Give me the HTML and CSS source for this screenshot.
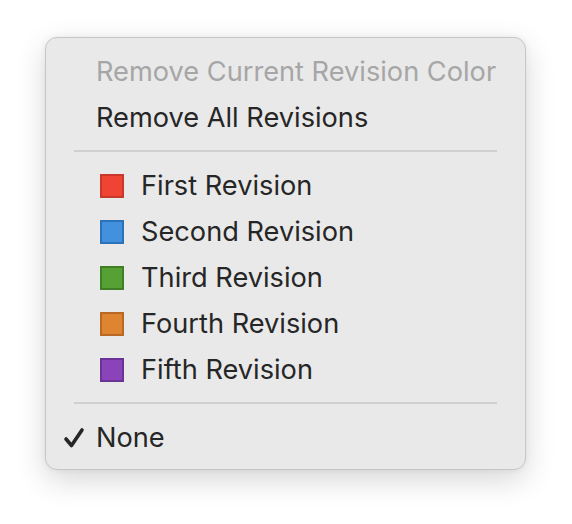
FILE: index.html
```html
<!DOCTYPE html>
<html>
<head>
<meta charset="utf-8">
<link rel="stylesheet" href="styles.css">
</head>
<body>
<div class="stage">
  <div class="menu">
    <div class="item disabled"><span class="label">Remove Current Revision Color</span></div>
    <div class="item"><span class="label">Remove All Revisions</span></div>
    <div class="sep"></div>
    <div class="item"><span class="swatch red"></span><span class="label">First Revision</span></div>
    <div class="item"><span class="swatch blue"></span><span class="label">Second Revision</span></div>
    <div class="item"><span class="swatch green"></span><span class="label">Third Revision</span></div>
    <div class="item"><span class="swatch orange"></span><span class="label">Fourth Revision</span></div>
    <div class="item"><span class="swatch purple"></span><span class="label">Fifth Revision</span></div>
    <div class="sep"></div>
    <div class="item checked">
      <svg class="check" width="22" height="22" viewBox="0 0 22 22"><path d="M3 12 L8.5 18.5 L19 3" fill="none" stroke="#262626" stroke-width="3.6" stroke-linecap="round" stroke-linejoin="round"/></svg>
      <span class="label">None</span>
    </div>
  </div>
</div>
</body>
</html>
```
FILE: styles.css
```css
html, body {
  margin: 0;
  padding: 0;
  background: #ffffff;
}
.stage {
  width: 572px;
  height: 524px;
  padding: 37px 0 0 45px;
  box-sizing: border-box;
}
.menu {
  width: 481px;
  height: 433px;
  box-sizing: border-box;
  background: #e9e9e9;
  border: 1px solid #c6c6c6;
  border-radius: 12px;
  box-shadow: 0 10px 30px rgba(0, 0, 0, 0.16), 0 0 6px rgba(0, 0, 0, 0.06);
  padding: 11px 0 0 0;
  font-family: Inter, "Noto Sans", sans-serif;
  font-size: 27.2px;
  color: #262626;
}
.item {
  height: 46px;
  display: flex;
  align-items: center;
  padding-left: 50px;
  position: relative;
}
.item.disabled {
  color: #a6a6a6;
}
.label {
  line-height: 46px;
}
.sep {
  height: 2px;
  margin: 9px 28px 11px 28px;
  background: #d0d0d0;
}
.swatch {
  width: 24px;
  height: 24px;
  box-sizing: border-box;
  border: 2px solid;
  margin-left: 4px;
  margin-right: 17px;
}
.red { background: #ef4433; border-color: #c8392b; }
.blue { background: #4391de; border-color: #2d71b8; }
.green { background: #57a134; border-color: #3f7f26; }
.orange { background: #df8430; border-color: #b86a22; }
.purple { background: #8a43b9; border-color: #6c3397; }
.check {
  position: absolute;
  left: 17px;
  top: 12px;
}
```
